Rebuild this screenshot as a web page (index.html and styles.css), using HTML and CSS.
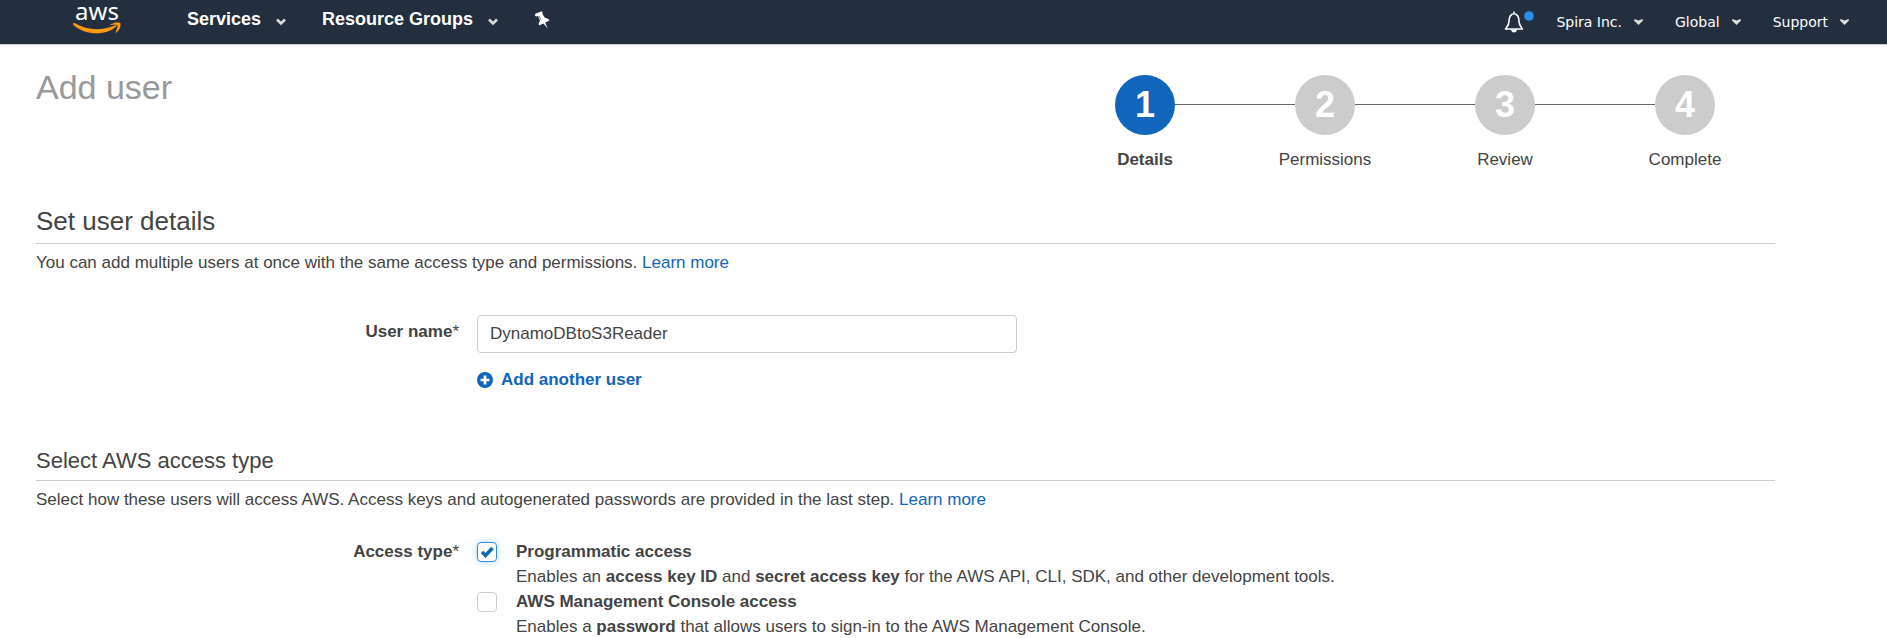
FILE: index.html
```html
<!DOCTYPE html>
<html lang="en">
<head>
<meta charset="utf-8">
<title>Add user</title>
<link rel="stylesheet" href="styles.css">
</head>
<body>
<header class="topbar">
  <a class="logo" href="#" aria-label="aws">
    <span class="logo-text">aws</span>
    <svg class="logo-smile" viewBox="0 0 48 14" aria-hidden="true">
      <path d="M0 1.500Q.5.500 2 1.300C14 8.500 29 9 42 3.500q2-.6 1.500.8C34 13.500 13 14.500 0 2.500z" fill="#ff9914"/>
      <path d="M37.500 2.500C41 0 46 0 47.300 1c.9 2-.5 7-3.800 9.500-.9.500-1 0-.7-.7 1-2.500 2.200-5.500 1.600-6.500-.9-1-4-.6-6.500-.3-.8 0-.9-.2-.4-.5z" fill="#ff9914"/>
    </svg>
  </a>
  <nav class="menu">
    <button class="menu-item" type="button">Services
      <svg class="chevron" viewBox="0 0 10 8" aria-hidden="true"><path d="M1 1.500l4 4 4-4" fill="none" stroke="#ddd" stroke-width="2.500"/></svg></button>
    <button class="menu-item" type="button">Resource Groups
      <svg class="chevron" viewBox="0 0 10 8" aria-hidden="true"><path d="M1 1.500l4 4 4-4" fill="none" stroke="#ddd" stroke-width="2.500"/></svg></button>
    <button class="pin" type="button" aria-label="Pin">
      <svg viewBox="0 0 16 18" aria-hidden="true"><path d="M1 4.500Q.5 3 2 2.500L7 .5q1.500-.3 1.500 1L8.500 3l2.500 4q3-.5 4.500 2.500l-4.300 2 2.500 6-4.200-5-4.500 2q-1-2.800 1-4.800L4 5 2.500 5.500Q1.500 5.500 1 4.500z" fill="#fff"/><path d="M5 5l2 4" stroke="#232f3e" stroke-width=".6"/></svg></button>
  </nav>
  <div class="account">
    <button class="bell" type="button" aria-label="Notifications">
      <svg viewBox="0 0 30 22" aria-hidden="true">
        <path d="M10 1v1.500C5.500 3.500 5 7 5 10.500 5 14 3 16 1.500 18h17c-1.500-2-3.500-4-3.500-7.500 0-3.500-.5-7-5-8z" fill="none" stroke="#fff" stroke-width="1.600" stroke-linejoin="round"/>
        <path d="M7 18.500h6q-.5 3-3 3t-3-3z" fill="#fff"/>
        <circle cx="25" cy="5" r="4.800" fill="#2e8be6"/>
      </svg></button>
    <button class="account-item" type="button">Spira Inc.
      <svg class="caret" viewBox="0 0 9 6" aria-hidden="true"><path d="M.5 0L4.500 1.500 8.500 0 9 1.500 4.500 6 0 1.500z" fill="#ddd"/></svg></button>
    <button class="account-item" type="button">Global
      <svg class="caret" viewBox="0 0 9 6" aria-hidden="true"><path d="M.5 0L4.500 1.500 8.500 0 9 1.500 4.500 6 0 1.500z" fill="#ddd"/></svg></button>
    <button class="account-item" type="button">Support
      <svg class="caret" viewBox="0 0 9 6" aria-hidden="true"><path d="M.5 0L4.500 1.500 8.500 0 9 1.500 4.500 6 0 1.500z" fill="#ddd"/></svg></button>
  </div>
</header>

<main class="page">
  <div class="page-head">
    <h1>Add user</h1>
    <ol class="steps">
      <li class="step current"><span class="step-number">1</span><span class="step-label">Details</span></li>
      <li class="step"><span class="step-number">2</span><span class="step-label">Permissions</span></li>
      <li class="step"><span class="step-number">3</span><span class="step-label">Review</span></li>
      <li class="step"><span class="step-number">4</span><span class="step-label">Complete</span></li>
    </ol>
  </div>

  <section class="user-details">
    <h2>Set user details</h2>
    <p class="intro">You can add multiple users at once with the same access type and permissions. <a href="#">Learn more</a></p>
    <div class="form-row">
      <label class="form-label" for="user-name">User name<span class="required">*</span></label>
      <div class="form-field">
        <input class="text-input" id="user-name" type="text" value="DynamoDBtoS3Reader">
        <button class="add-user" type="button">
          <svg viewBox="0 0 18 18" aria-hidden="true"><circle cx="9" cy="9" r="9" fill="#1166bb"/><path d="M9 4v10M4 9h10" stroke="#fff" stroke-width="3"/></svg>Add another user</button>
      </div>
    </div>
  </section>

  <section class="access-type">
    <h3>Select AWS access type</h3>
    <p class="intro">Select how these users will access AWS. Access keys and autogenerated passwords are provided in the last step. <a href="#">Learn more</a></p>
    <div class="form-row" role="group" aria-labelledby="access-label">
      <span class="form-label" id="access-label">Access type<span class="required">*</span></span>
      <div class="options">
        <div class="option">
          <input class="check" id="programmatic" type="checkbox" checked>
          <div><label for="programmatic">Programmatic access</label>
          <p>Enables an <b>access key ID</b> and <b>secret access key</b> for the AWS API, CLI, SDK, and other development tools.</p></div>
        </div>
        <div class="option">
          <input class="check" id="console" type="checkbox">
          <div><label for="console">AWS Management Console access</label>
          <p>Enables a <b>password</b> that allows users to sign-in to the AWS Management Console.</p></div>
        </div>
      </div>
    </div>
  </section>
</main>
</body>
</html>
```
FILE: styles.css
```css
* { box-sizing: border-box; }

body {
  margin: 0;
  background: #fff;
  color: #444;
  font: 17px/25px "Liberation Sans", Arial, sans-serif;
}

h1, h2, h3, p, ol { margin: 0; padding: 0; font-weight: normal; }
a { color: #1166bb; text-decoration: none; }

button {
  display: flex;
  align-items: center;
  margin: 0;
  padding: 0;
  border: 0;
  background: none;
  color: inherit;
  font: inherit;
}

/* Top navigation */
.topbar {
  display: flex;
  height: 45px;
  padding: 0 38px 0 73px;
  background: #232f3e;
  border-bottom: 1px solid #ccc;
  color: #fff;
}

.logo { display: flex; flex-direction: column; align-items: center; width: 48px; color: #fff; }
.logo-text { font: 24px/22px "Noto Sans", "Open Sans", sans-serif; }
.logo-smile { width: 48px; height: 14px; }

.menu { display: flex; align-items: center; height: 38px; margin-left: 66px; gap: 36px; font-size: 18px; font-weight: bold; text-shadow: 0 1px 0 #000; }
.menu-item { gap: 15px; }
.chevron { width: 10px; height: 8px; margin-top: 6px; }
.pin svg { width: 16px; height: 18px; margin-top: 2px; }

.account { display: flex; align-items: center; height: 44px; margin-left: auto; gap: 32px; font: 14px/20px "DejaVu Sans", Verdana, sans-serif; text-shadow: 0 1px 0 #000; }
.account-item { gap: 12px; }
.caret { width: 9px; height: 6px; }
.bell { margin-right: -10px; }
.bell svg { width: 30px; height: 22px; }

/* Page */
.page { padding: 30px 112px 0 36px; }
.page-head { display: flex; justify-content: space-between; }
h1 { color: #999; font-size: 34px; line-height: 24px; }

.steps { display: flex; list-style: none; }
.step { position: relative; display: flex; flex-direction: column; align-items: center; gap: 12px; width: 180px; }
.step + .step::before {
  content: "";
  position: absolute;
  top: 29px;
  right: 120px;
  width: 120px;
  height: 1px;
  background: #666;
}
.step-number {
  width: 60px;
  height: 60px;
  border-radius: 50%;
  background: #ccc;
  color: #fff;
  font-size: 36px;
  font-weight: bold;
  line-height: 60px;
  text-align: center;
}
.current { font-weight: bold; }
.current .step-number { background: #1166bb; }

h2, h3 { padding-bottom: 6px; border-bottom: 1px solid #ccc; }
h2 { margin-top: 33px; font-size: 26px; line-height: 32px; }
h3 { font-size: 22px; line-height: 26px; }
.intro { margin-top: 6px; }

.form-row { display: flex; margin-top: 40px; }
.form-label { width: 423px; font-weight: bold; text-align: right; }
.required { font-weight: normal; }
.user-details .form-label { padding-top: 4px; }
.form-field { margin-left: 18px; }

.text-input {
  display: block;
  width: 540px;
  height: 38px;
  padding: 0 12px;
  border: 1px solid #ccc;
  border-radius: 4px;
  color: #444;
  font: inherit;
}

.add-user { gap: 8px; margin-top: 14px; color: #1166bb; font-weight: bold; }
.add-user svg { width: 16px; height: 16px; }

.access-type { margin-top: 56px; }
.access-type .form-row { margin-top: 27px; }
.options { margin-left: 18px; }
.option { display: flex; gap: 19px; }
.option label { display: block; font-weight: bold; }

.check {
  width: 20px;
  height: 20px;
  margin: 3px 0 0;
  appearance: none;
  border: 1px solid #ccc;
  border-radius: 4px;
  background: #fff;
}
.check:checked {
  border-color: #2e8be6;
  box-shadow: 0 0 6px #a9d0f5;
  background: url("data:image/svg+xml,%3Csvg xmlns='http://www.w3.org/2000/svg' viewBox='0 0 18 18'%3E%3Cpath d='M4 9l3.500 3.500L14.500 5' fill='none' stroke='%231166bb' stroke-width='3.500'/%3E%3C/svg%3E") center / 18px no-repeat;
}
```
